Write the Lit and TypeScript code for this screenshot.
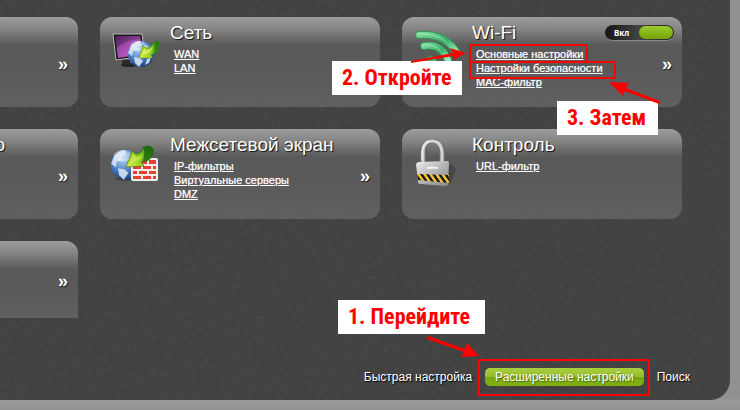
import { LitElement, html, css, svg, nothing } from "lit";
import { customElement, property } from "lit/decorators.js";

const globe = svg`
  <circle cx="27" cy="26" r="13" fill="url(#sea)"/>
  <path d="M17 18q4-5 9-5l1 4-4 2 1 3-5 1-1 5-4-3zM20 29l6 1 3 3-4 6-4-4zM31 17l5 2 3 6-5 3-2-4-4-1zM33 31l4-2-2 6-4 2z" fill="#dce9f8" opacity=".85"/>
  <ellipse cx="24" cy="18" rx="8" ry="5" fill="#fff" opacity=".3"/>`;

const arrow = svg`
  <path d="M27 30l4-13 3 3q6-1 8-6l4-1q2 2 1 7-2 6-8 7l2 3z" fill="url(#leaf)" stroke="#3d8a10" stroke-width=".5"/>
  <path d="M42 14l4-1q2 2 1 7-2 6-7 7 4-6 2-13z" fill="#1d7410" opacity=".65"/>
  <path d="M30 27l2-7 3 2q4-1 6-4-1 6-6 8z" fill="#f4f77a" opacity=".65"/>`;

const defs = svg`<defs>
  <radialGradient id="sea" cx=".4" cy=".3" r=".75">
    <stop offset="0" stop-color="#b9d6f5"/><stop offset=".55" stop-color="#4d7fc4"/><stop offset="1" stop-color="#17366f"/>
  </radialGradient>
  <linearGradient id="leaf" x1="0" y1="1" x2="1" y2="0">
    <stop offset="0" stop-color="#e6f04a"/><stop offset=".5" stop-color="#7cc61c"/><stop offset="1" stop-color="#1f7a12"/>
  </linearGradient>
  <linearGradient id="screen" x1="0" y1="0" x2="1" y2="1">
    <stop offset="0" stop-color="#5a2468"/><stop offset=".4" stop-color="#a04cab"/><stop offset="1" stop-color="#d263dc"/>
  </linearGradient>
  <linearGradient id="wave" x1="0" y1="0" x2="1" y2="1">
    <stop offset="0" stop-color="#7ad99b"/><stop offset=".5" stop-color="#3bb069"/><stop offset="1" stop-color="#a5ecbd"/>
  </linearGradient>
  <linearGradient id="steel" x1="0" y1="0" x2="1" y2="1">
    <stop offset="0" stop-color="#ededed"/><stop offset=".5" stop-color="#b5b5b5"/><stop offset="1" stop-color="#858585"/>
  </linearGradient>
  <pattern id="hazard" width="6" height="10" patternUnits="userSpaceOnUse" patternTransform="skewX(35)">
    <rect width="6" height="10" fill="#f4c33c"/><rect width="3" height="10" fill="#1c1a14"/>
  </pattern>
</defs>`;

const icons: Record<string, unknown> = {
  network: svg`
    <ellipse cx="17" cy="37" rx="8" ry="2" fill="#222"/>
    <path d="M10 32h8v4h-8z" fill="#2b2b2b"/>
    <path d="M1 6l29 0 3 22-29 4z" fill="#191919" stroke="#b9b9b9" stroke-width="1"/>
    <path d="M3 8l25 0 3 18-25 4z" fill="url(#screen)"/>
    <path d="M3 8h25v3q-15 1-24 9z" fill="#311039" opacity=".3"/>
    <g transform="translate(2)">${globe}</g>${arrow}`,
  firewall: svg`
    <ellipse cx="16" cy="39" rx="13" ry="2" fill="#222" opacity=".4"/>
    <g transform="translate(-17 -5) scale(1.15)">${globe}</g>
    <rect x="19" y="18" width="27" height="23" rx="2" fill="#f6eeee"/>
    <path d="M21 20h4v4h-4zM27 20h8v4h-8zM37 20h7v4h-7zM21 26h8v3h-8zM31 26h8v3h-8zM41 26h3v3h-3zM21 31h4v3h-4zM27 31h8v3h-8zM37 31h7v3h-7zM21 36h8v3h-8zM31 36h8v3h-8zM41 36h3v3h-3z" fill="#e5432f"/>
    <path d="M14 27l6-16 4 3q7-1 7-7l6-1q6 2 4 8-3 8-12 8l3 4z" fill="url(#leaf)" stroke="#2b6b12" stroke-width=".6"/>
    <path d="M31 7l6-1q6 2 4 8-3 8-11 8 4-8 1-15z" fill="#145a0e" opacity=".7"/>
    <path d="M18 24l3-10 4 3q4-1 6-4-1 7-7 8z" fill="#eef56a" opacity=".5"/>`,
  wifi: svg`
    <g fill="none" stroke-linecap="round">
      <path d="M5 7q26-2 38 18" stroke="#2f9456" stroke-width="8"/>
      <path d="M5 7q26-2 38 18" stroke="url(#wave)" stroke-width="6"/>
      <path d="M10 18q17-3 24 14" stroke="#2f9456" stroke-width="8"/>
      <path d="M10 18q17-3 24 14" stroke="url(#wave)" stroke-width="6"/>
      <path d="M4 6q17-1 27 7M9 17q11-1 17 5" stroke="#b6f0c8" stroke-width="1" opacity=".7"/>
    </g>
    <circle cx="17" cy="34" r="6" fill="#46b571" stroke="#2b8a4f"/>`,
  lock: svg`
    <path d="M36 23l6 6-5 14-7 1z" fill="#222" opacity=".35"/>
    <path d="M9 24V12Q9 1 18 1t10 11v11" fill="none" stroke="#777" stroke-width="5"/>
    <path d="M9 24V12Q9 1 18 1t10 11v11" fill="none" stroke="#d4d4d4" stroke-width="3"/>
    <path d="M8 20V12q1-8 7-10" fill="none" stroke="#fff" stroke-width="1"/>
    <path d="M4 22l29-1q2 0 2 2l-1 21q0 2-3 2L7 44q-3 0-3-2L2 24z" fill="url(#steel)"/>
    <path d="M3 34l32 1v8L4 40z" fill="url(#hazard)"/>
    <path d="M13 28q6-1 11 0" stroke="#fff" stroke-width="2" fill="none" opacity=".8"/>`,
};

@customElement("menu-card")
class MenuCard extends LitElement {
  @property() heading = "";
  @property() icon = "";
  @property({ attribute: false }) links: string[] = [];
  @property({ type: Boolean }) more = false;

  static styles = css`
    :host {
      position: relative;
      display: flex;
      box-sizing: border-box;
      min-width: 0;
      min-height: 90px;
      padding: 5px 10px 0 12px;
      border-radius: 12px;
      background: linear-gradient(#a6a6a6e6 0, #8c8c8ce6 12px, #5c5c5ce6 28px, #5c5c5ce6 50px, #636363e6 100%);
      color: #fff;
    }
    :host([edge]) { border-radius: 0 12px 12px 0; padding-left: 0; }
    :host([cut]) { border-radius: 0 12px 0 0; min-height: 77px; }
    .icon { flex: none; width: 48px; height: 48px; margin-top: 6px; overflow: visible; }
    .body { flex: 1; min-width: 0; padding-left: 10px; }
    :host([edge]) .body { padding-left: 0; }
    h2 {
      margin: 0;
      font-size: 19px;
      font-weight: 400;
      line-height: 22px;
      white-space: nowrap;
      text-shadow: 1px 1px 1px #111;
    }
    :host([edge]) h2 { display: flex; justify-content: flex-end; width: 5px; height: 22px; }
    ul { margin: 3px 0 0; padding: 0 0 0 4px; list-style: none; }
    li { font-size: 11px; line-height: 14px; white-space: nowrap; }
    a { color: #fff; text-shadow: 0 0 1px #ffffffb0; }
    .more {
      align-self: center;
      border: 0;
      padding: 0 0 2px;
      background: none;
      color: #fff;
      font: 700 18px/20px "Liberation Sans", Arial, sans-serif;
      text-shadow: 1px 1px 1px #222;
    }
  `;

  render() {
    return html`
      ${this.icon ? html`<svg class="icon" viewBox="0 0 48 48" aria-hidden="true">${defs}${icons[this.icon]}</svg>` : nothing}
      <div class="body">
        <h2>${this.heading}</h2>
        <ul>${this.links.map((l) => html`<li><a href="#">${l}</a></li>`)}</ul>
      </div>
      ${this.more ? html`<button class="more">»</button>` : nothing}
      <slot></slot>
    `;
  }
}

@customElement("app-root")
class AppRoot extends LitElement {
  static styles = css`
    :host {
      display: block;
      box-sizing: border-box;
      min-height: 100vh;
      padding: 0 10px 10px 0;
      background: linear-gradient(#919191 0 97%, #999 98%, #929292);
      font-family: "Liberation Sans", Arial, sans-serif;
    }
    .panel {
      position: relative;
      box-sizing: border-box;
      display: flex;
      flex-direction: column;
      min-height: calc(100vh - 10px);
      padding: 17px 40px 13px 0;
      border-radius: 0 0 20px 0;
      background: #3f3f3f;
      overflow: hidden;
    }
    .grain { position: absolute; inset: 0; width: 100%; height: 100%; opacity: 0.07; }
    .grid {
      position: relative;
      display: grid;
      grid-template-columns: 78px minmax(0, 1fr) minmax(0, 1fr);
      align-items: start;
      gap: 22px;
      padding-right: 8px;
    }
    nav {
      position: relative;
      display: flex;
      justify-content: flex-end;
      align-items: center;
      gap: 13px;
      margin-top: auto;
      font-size: 12px;
      line-height: 20px;
    }
    nav a { color: #fff; text-decoration: none; text-shadow: 1px 1px 1px #000; white-space: nowrap; }
    nav .current {
      position: relative;
      padding: 0 10px;
      line-height: 18px;
      border-radius: 5px;
      background: linear-gradient(#a9cf3e, #94bd2a 50%, #75a50b 51%, #82b112);
      text-shadow: 1px 1px 1px #4d6b10;
    }
    .toggle {
      position: absolute;
      top: 8px;
      right: 8px;
      display: flex;
      align-items: center;
      justify-content: space-between;
      box-sizing: border-box;
      width: 69px;
      height: 16px;
      padding: 0 1px 0 9px;
      border-radius: 8px;
      background: linear-gradient(90deg, #151515, #444 50%, #222);
      border-bottom: 1px solid #888;
      font: 700 8px/14px "Noto Sans", sans-serif;
    }
    .toggle input {
      appearance: none;
      width: 34px;
      height: 13px;
      margin: 0;
      border-radius: 7px;
      background: linear-gradient(#9cca2c, #86b818 50%, #74a30c);
    }
    .frame { position: absolute; border: 2px solid #f00; border-radius: 1px; }
    .frame.basic { left: 67px; top: 27px; width: 115px; height: 15px; }
    .frame.security { left: 67px; top: 44px; width: 143px; height: 14px; }
    .frame.tab { inset: -9px -6px -10px -7px; }
    .callout {
      position: absolute;
      z-index: 2;
      box-sizing: border-box;
      height: 34px;
      padding: 0 10px;
      background: #fff;
      color: #f00;
      font: 700 22px/34px "Liberation Sans Narrow", "Roboto Condensed", "Liberation Sans", sans-serif;
      text-shadow: none;
      white-space: nowrap;
    }
    .callout.open { right: 220px; top: 44px; width: 130px; }
    .callout.then { left: 155px; top: 84px; width: 101px; }
    .callout.go { right: 205px; bottom: 53px; width: 147px; }
    .pointer { position: absolute; z-index: 3; overflow: visible; fill: #f00; }
    .pointer.open { left: 8px; top: 28px; }
    .pointer.then { left: 207px; top: 62px; }
    .pointer.go { right: 210px; bottom: 31px; }
  `;

  render() {
    return html`
      <main class="panel">
        <svg class="grain" aria-hidden="true">
          <filter id="noise"><feTurbulence type="fractalNoise" baseFrequency=".25" numOctaves="3" seed="4"/><feColorMatrix type="saturate" values="0"/></filter>
          <rect width="100%" height="100%" filter="url(#noise)"/>
        </svg>
        <section class="grid">
          <menu-card edge more></menu-card>
          <menu-card icon="network" heading="Сеть" .links=${["WAN", "LAN"]}></menu-card>
          <menu-card icon="wifi" heading="Wi-Fi" more .links=${["Основные настройки", "Настройки безопасности", "MAC-фильтр"]}>
            <label class="toggle">Вкл<input type="checkbox" checked></label>
            <span class="frame basic"></span>
            <span class="frame security"></span>
            <span class="callout open">2. Откройте</span>
            <span class="callout then">3. Затем</span>
            <svg class="pointer open" width="60" height="20"><path d="M1 16L43 8 40 3 56 8 43 15 43 11 1 18z"/></svg>
            <svg class="pointer then" width="52" height="25"><path d="M0 3L20 4 17 9 51 22 50 25 16 12 14 17z"/></svg>
          </menu-card>
          <menu-card edge more heading="о"></menu-card>
          <menu-card icon="firewall" heading="Межсетевой экран" more .links=${["IP-фильтры", "Виртуальные серверы", "DMZ"]}></menu-card>
          <menu-card icon="lock" heading="Контроль" .links=${["URL-фильтр"]}></menu-card>
          <menu-card edge cut more></menu-card>
        </section>
        <nav>
          <span class="callout go">1. Перейдите</span>
          <svg class="pointer go" width="53" height="22"><path d="M0 5L37 18 34 23 52 22 40 9 38 15 1 2z"/></svg>
          <a href="#">Быстрая настройка</a>
          <a href="#" class="current">Расширенные настройки<span class="frame tab"></span></a>
          <a href="#">Поиск</a>
        </nav>
      </main>
    `;
  }
}
